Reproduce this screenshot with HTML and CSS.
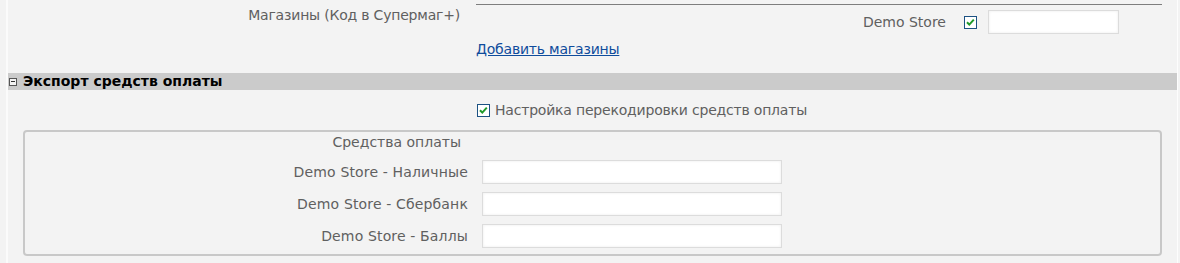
FILE: index.html
```html
<!DOCTYPE html>
<html>
<head>
<meta charset="utf-8">
<link rel="stylesheet" href="styles.css">
</head>
<body>
<div class="page">
  <div class="form-row stores-row">
    <div class="label top-label">Магазины (Код в Супермаг+)</div>
    <div class="stores-col">
      <div class="store-line">
        <span class="store-name">Demo Store</span>
        <span class="checkbox"><svg viewBox="0 0 11 11" width="11" height="11"><path d="M2 5.2 L4.3 7.6 L8.8 2.6" fill="none" stroke="#1f9a2a" stroke-width="2"/></svg></span>
        <span class="input store-input"></span>
      </div>
      <a class="add-link" href="#">Добавить магазины</a>
    </div>
  </div>

  <div class="section-head">
    <span class="toggle"><span class="minus"></span></span>
    <span class="section-title">Экспорт средств оплаты</span>
  </div>

  <div class="form-row check-row">
    <div></div>
    <label class="check-label">
      <span class="checkbox"><svg viewBox="0 0 11 11" width="11" height="11"><path d="M2 5.2 L4.3 7.6 L8.8 2.6" fill="none" stroke="#1f9a2a" stroke-width="2"/></svg></span>
      <span class="check-text">Настройка перекодировки средств оплаты</span>
    </label>
  </div>

  <div class="pay-box">
    <div class="pay-title">Средства оплаты</div>
    <div class="pay-grid">
      <div class="pay-label">Demo Store - Наличные</div>
      <span class="input pay-input"></span>
      <div class="pay-label">Demo Store - Сбербанк</div>
      <span class="input pay-input"></span>
      <div class="pay-label">Demo Store - Баллы</div>
      <span class="input pay-input"></span>
    </div>
  </div>
</div>
</body>
</html>
```

FILE: styles.css
```css
html, body {
  margin: 0;
  padding: 0;
  background: #f3f3f3;
}

body {
  font-family: "DejaVu Sans", Verdana, sans-serif;
  font-size: 14px;
  color: #606060;
}

.page {
  margin: 0 2px 0 6px;
  border-left: 2px solid #fbfbfb;
  border-right: 1px solid #fdfdfd;
  height: 263px;
  box-sizing: border-box;
}

.form-row {
  display: grid;
  grid-template-columns: 468px 686px;
}

.stores-row {
  padding-top: 4px;
}

.top-label {
  text-align: right;
  padding-right: 16px;
  padding-top: 3px;
  line-height: 17px;
  letter-spacing: -0.2px;
}

.stores-col {
  border-top: 1px solid #7e7e7e;
}

.store-line {
  display: flex;
  align-items: center;
  justify-content: flex-end;
  margin-top: 5px;
  padding-right: 43px;
}

.store-name {
  margin-right: 18px;
  line-height: 17px;
}

.checkbox {
  display: inline-flex;
  align-items: center;
  justify-content: center;
  width: 11px;
  height: 11px;
  border: 1px solid #1c5283;
  background: #fff;
  flex: none;
}

.store-input {
  margin-left: 11px;
  width: 129px;
  height: 22px;
}

.input {
  display: block;
  background: #fff;
  border: 1px solid #dcdcdc;
  box-shadow: inset 0 0 3px #ececec;
}

.add-link {
  display: inline-block;
  margin-top: 7px;
  line-height: 17px;
  color: #0f4c9c;
  text-decoration: underline;
  letter-spacing: -0.2px;
}

.section-head {
  margin-top: 15px;
  height: 17px;
  background: #cbcbcb;
  display: flex;
  align-items: center;
}

.toggle {
  width: 6px;
  height: 6px;
  border: 1px solid #555;
  background: #f3f3f3;
  margin-left: 1px;
  margin-right: 6px;
  display: flex;
  align-items: center;
  justify-content: center;
}

.minus {
  width: 4px;
  height: 1px;
  background: #333;
}

.section-title {
  font-weight: bold;
  color: #000;
  line-height: 17px;
}

.check-row {
  padding-top: 12px;
}

.check-label {
  display: flex;
  align-items: center;
  line-height: 17px;
  padding-left: 1px;
}

.check-text {
  letter-spacing: -0.2px;
}

.check-label .checkbox {
  margin-right: 5px;
}

.pay-box {
  margin: 11px 15px 0 15px;
  border: 2px solid #c8c8c8;
  border-radius: 4px;
  padding: 2px 0 6px 0;
}

.pay-title {
  width: 443px;
  text-align: right;
  padding-right: 7px;
  box-sizing: border-box;
  line-height: 17px;
}

.pay-grid {
  margin-top: 9px;
  display: grid;
  grid-template-columns: 443px 300px;
  column-gap: 14px;
  row-gap: 8px;
  align-items: center;
}

.pay-label {
  text-align: right;
  line-height: 17px;
  letter-spacing: 0.15px;
}

.pay-input {
  width: 298px;
  height: 22px;
  box-sizing: content-box;
}
```
